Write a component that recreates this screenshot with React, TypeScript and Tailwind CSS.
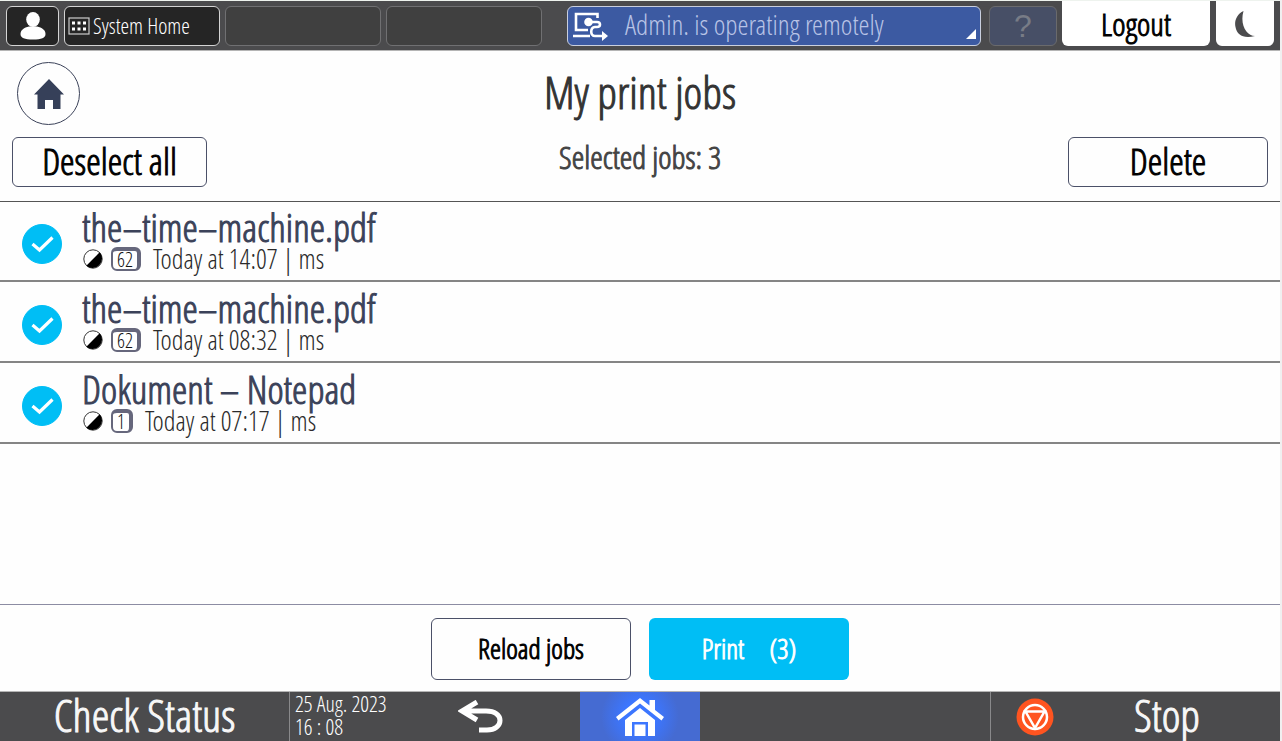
import { useState } from "react";

interface Job {
  id: number;
  name: string;
  pages: number;
  time: string;
  owner: string;
}

const jobs: Job[] = [
  { id: 1, name: "the–time–machine.pdf", pages: 62, time: "Today at 14:07", owner: "ms" },
  { id: 2, name: "the–time–machine.pdf", pages: 62, time: "Today at 08:32", owner: "ms" },
  { id: 3, name: "Dokument – Notepad", pages: 1, time: "Today at 07:17", owner: "ms" },
];

function ContrastIcon() {
  return (
    <svg viewBox="0 0 20 20" className="ml-px w-5 h-5 shrink-0">
      <circle cx="10" cy="10" r="9.2" fill="#fff" stroke="#333" strokeWidth="1" />
      <path d="M16.7 3.3 A9.5 9.5 0 0 1 3.3 16.7 Z" fill="#000" />
    </svg>
  );
}

function PageCount({ pages }: { pages: number }) {
  return (
    <span className="ml-2 inline-flex h-6 shrink-0 rounded-md border-2 border-t-4 border-r-4 border-[#66677c] bg-white px-1 text-xl leading-[18px] text-[#111]">
      {pages}
    </span>
  );
}

function JobRow({ job, checked, onToggle }: { job: Job; checked: boolean; onToggle: () => void }) {
  return (
    <li className="h-[81px] first:h-20 border-b-2 border-[#858585] pt-1.5">
      <label className="flex h-full items-center pl-[22px]">
        <span className="relative h-10 w-10 shrink-0">
          <input
            type="checkbox"
            checked={checked}
            onChange={onToggle}
            className="block h-10 w-10 appearance-none rounded-full border border-[#00bef5] checked:bg-[#00bef5]"
          />
          <svg viewBox="0 0 40 40" className="pointer-events-none absolute inset-0 h-10 w-10">
            <path d="M10.500 20 L17.500 26 L30.500 13.500" fill="none" stroke="#fff" strokeWidth="3.2" />
          </svg>
        </span>
        <span className="ml-5 flex flex-col pb-1.5">
          <span className="text-[39px] leading-9 text-[#3b4259]">{job.name}</span>
          <span className="flex h-7 items-center text-[27px] leading-7 text-[#2a2a2a] [-webkit-text-stroke:0]">
            <ContrastIcon />
            <PageCount pages={job.pages} />
            <span className="ml-3">
              {job.time} | {job.owner}
            </span>
          </span>
        </span>
      </label>
    </li>
  );
}

function TopBar() {
  return (
    <header className="flex h-[51px] items-start border-t border-b border-t-[#eef3ee] border-b-[#b5b5b5] bg-[#4b4b4d] pl-1.5 pr-1.5">
      <button aria-label="User" className="mt-[5px] flex h-10 w-[53px] shrink-0 items-center justify-center rounded-md border border-[#d4d4d4] bg-[#252525]">
        <svg viewBox="0 0 26 28" className="h-7 w-[26px]" fill="#fff">
          <ellipse cx="13" cy="7.5" rx="6.8" ry="7.5" />
          <path d="M9 14.500h8c5 1 8.500 3.500 8.500 7.500s-4 5.500-12.500 5.500S.5 26 .5 22c0-4 3.500-6.500 8.500-7.500z" />
        </svg>
      </button>
      <button className="mt-[5px] ml-[5px] flex h-10 w-[156px] shrink-0 items-center gap-[3px] rounded-md border border-[#d4d4d4] bg-[#252525] pl-[3px] text-[22px] leading-8 text-white [-webkit-text-stroke:0]">
        <svg viewBox="0 0 22 18" className="h-[18px] w-[22px]">
          <rect x="1" y="1" width="20" height="16" fill="none" stroke="#ccc" strokeWidth="1.2" />
          <path d="M4 6h3M9.500 6h3M15 6h3M4 12h3M9.500 12h3M15 12h3" stroke="#fff" strokeWidth="3" />
        </svg>
        <span className="pb-0.5">System Home</span>
      </button>
      <button disabled aria-label="Empty slot" className="mt-[5px] ml-[5px] h-10 w-[156px] shrink-0 rounded-md border border-[#707072] bg-[#404040]" />
      <button disabled aria-label="Empty slot" className="mt-[5px] ml-[5px] h-10 w-[156px] shrink-0 rounded-md border border-[#707072] bg-[#404040]" />
      <button className="relative mt-[5px] ml-[25px] flex h-10 flex-1 items-center rounded-md border border-[#c9cfde] bg-[#3c5aa2] pl-[5px] text-[28px] leading-8 text-[#b8c3e6] [-webkit-text-stroke:0]">
        <svg viewBox="0 0 36 30" className="h-[30px] w-9" fill="none" stroke="#fff" strokeWidth="2.6">
          <path d="M24.500 7V3H3v16h12M0 25h17" />
          <path d="M16 11h8c4 0 4 5 0 5h-2c-5 .5-5 9 0 9h8" />
          <circle cx="15.500" cy="11" r="3" fill="#fff" />
          <path d="M29 20l6 5-6 5z" fill="#fff" stroke="none" />
        </svg>
        <span className="ml-4 pb-1">Admin. is operating remotely</span>
        <svg viewBox="0 0 10 10" className="absolute right-1 bottom-1.5 h-2.5 w-2.5">
          <path d="M10 0V10H0z" fill="#fff" />
        </svg>
      </button>
      <button disabled aria-label="Help" className="mt-[5px] ml-2 flex h-10 w-[68px] shrink-0 items-center justify-center rounded-md border border-[#6a6a6c] bg-[#474f66] font-['Liberation_Sans',sans-serif] text-[32px] text-[#787c86] [-webkit-text-stroke:0]">
        ?
      </button>
      <button className="ml-[5px] h-[45px] w-[148px] shrink-0 rounded-b-md bg-white text-[32px] leading-[45px] text-black">Logout</button>
      <button aria-label="Sleep" className="ml-1.5 flex h-[45px] w-[58px] shrink-0 items-center justify-center rounded-b-md bg-white">
        <svg viewBox="0 0 20 28" className="h-7 w-5">
          <path d="M8.500 1C2 4-1 11 .5 17c1.500 8 8 12 19.500 9C12 26 4.500 15 8.500 1z" fill="#4b4b4d" />
        </svg>
      </button>
    </header>
  );
}

function BottomBar() {
  return (
    <footer className="flex h-[50px] shrink-0 items-stretch border-t border-[#b5b5b5] bg-[#4b4b4d] text-[#f7f7f7]">
      <button className="w-[289px] shrink-0 pb-1 text-[45px] leading-10">Check Status</button>
      <div className="w-[101px] shrink-0 whitespace-nowrap border-l border-[#89898b] pl-[5px] text-[22px] leading-[23px] text-white [-webkit-text-stroke:0]">
        <p>25 Aug. 2023</p>
        <p>16 : 08</p>
      </div>
      <button aria-label="Back" className="flex flex-[19] items-center justify-center">
        <svg viewBox="0 0 45 33" className="mr-2.5 h-[33px] w-[45px]">
          <path d="M19 2L4 11l15 9M4 11h24c9 0 14 4 14 9.500S37 30 29 30H21" fill="none" stroke="#fff" strokeWidth="5" />
        </svg>
      </button>
      <button aria-label="Home" className="flex w-[120px] shrink-0 items-center justify-center bg-[radial-gradient(circle,#3c76ff_25%,#456bd2_60%)]">
        <svg viewBox="0 0 48 38" className="h-[38px] w-12" fill="#fff">
          <path d="M0 19L24 0l9.500 7.500V2H39v10l9 7-2.500 3.500L24 5.500 2.500 22.500z" />
          <path d="M9 22L24 10l15 12v16h-7V24H16v14H9z" />
          <path d="M18.500 26.500h11V38h-11z" />
        </svg>
      </button>
      <div className="flex-[29]" />
      <button className="flex w-[290px] shrink-0 items-center border-l border-[#89898b] pl-[25px] text-[45px] leading-10">
        <svg viewBox="0 0 38 38" className="h-[38px] w-[38px] shrink-0">
          <circle cx="19" cy="19" r="18.500" fill="#ff5420" />
          <g fill="none" stroke="#fff" strokeWidth="2.500">
            <circle cx="19" cy="19" r="12" />
            <path d="M9.500 13.500h19L19 30z" />
          </g>
        </svg>
        <span className="flex-1 pb-1">Stop</span>
      </button>
    </footer>
  );
}

export default function App() {
  const [selected, setSelected] = useState<number[]>(jobs.map((j) => j.id));

  const toggle = (id: number) =>
    setSelected((prev) => (prev.includes(id) ? prev.filter((x) => x !== id) : [...prev, id]));

  return (
    <div className="min-h-screen bg-[#f0f0f0] pr-0.5 font-['Open_Sans_Condensed_Light','Roboto_Condensed',sans-serif] [-webkit-text-stroke:1px]">
      <div className="flex min-h-screen flex-col bg-[#fefefe]">
        <TopBar />
        <div className="grid grid-cols-[1fr_auto_1fr] items-center px-[17px] pt-[11px]">
          <button aria-label="Home" className="flex h-[63px] w-[63px] items-center justify-center rounded-full border border-[#3b4259]">
            <svg viewBox="0 0 30 30" className="h-[30px] w-[30px]" fill="#364059">
              <path d="M15 0l15 15.500h-3.500V30H19v-9h-8v9H3.500V15.500H0z" />
            </svg>
          </button>
          <h1 className="pb-1 text-[45px] leading-[56px] text-[#333]">My print jobs</h1>
        </div>
        <div className="grid grid-cols-[1fr_auto_1fr] items-center px-3 pt-3 pb-3.5">
          <button
            onClick={() => setSelected([])}
            className="h-[50px] w-[195px] rounded-md border border-[#4b5068] pb-0.5 text-[37px] leading-[46px] text-black"
          >
            Deselect all
          </button>
          <p className="pb-2.5 text-[32px] leading-9 text-[#444]">Selected jobs: {selected.length}</p>
          <button className="h-[50px] w-[200px] justify-self-end rounded-md border border-[#4b5068] pb-0.5 text-[37px] leading-[46px] text-black">
            Delete
          </button>
        </div>
        <ul className="flex-1 border-t border-[#555]">
          {jobs.map((job) => (
            <JobRow key={job.id} job={job} checked={selected.includes(job.id)} onToggle={() => toggle(job.id)} />
          ))}
        </ul>
        <div className="flex h-[87px] shrink-0 justify-center gap-[18px] border-t border-[#8c8ca3] pt-[13px]">
          <button className="h-[62px] w-[200px] rounded-md border border-[#4b5068] pb-0.5 text-[28px] text-black">Reload jobs</button>
          <button className="h-[62px] w-[200px] rounded-md bg-[#00bef5] pb-0.5 text-[28px] text-white">
            Print <span className="ml-5">({selected.length})</span>
          </button>
        </div>
        <BottomBar />
      </div>
    </div>
  );
}
